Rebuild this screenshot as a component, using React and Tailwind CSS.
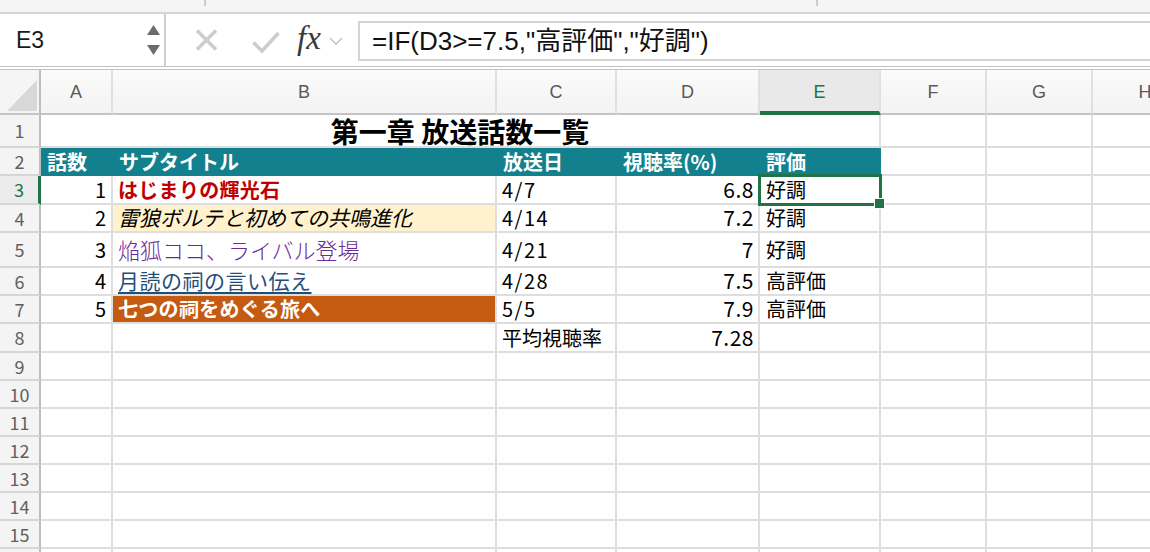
import React from "react";

const JP = "font-['Noto_Sans_CJK_JP',sans-serif]";
const SANS = "font-['Liberation_Sans','Noto_Sans_CJK_JP',sans-serif]";

const base =
  "shrink-0 h-full border-r-2 border-b-2 border-[#dedede] flex items-center whitespace-nowrap";

function Cell({ w, className = "", children }) {
  return <div className={`${w} ${base} ${className}`}>{children}</div>;
}

function RowHead({ n, sel }) {
  return (
    <div
      className={
        sel
          ? "shrink-0 w-[41px] h-full bg-[#ececec] border-r-[3px] border-r-[#217346] border-b-2 border-b-[#d6d6d6] flex items-center justify-center text-[18px] text-[#217346] font-['Noto_Sans_CJK_JP',sans-serif]"
          : "shrink-0 w-[41px] h-full bg-[#f4f4f4] border-r-2 border-r-[#bdbdbd] border-b-2 border-b-[#d6d6d6] flex items-center justify-center text-[18px] text-[#606060] font-['Noto_Sans_CJK_JP',sans-serif]"
      }
    >
      {n}
    </div>
  );
}

function Tail() {
  return (
    <>
      <Cell w="w-[106px]" />
      <Cell w="w-[106px]" />
      <Cell w="w-[106px]" />
    </>
  );
}

function EmptyRow({ n }) {
  return (
    <div className="flex h-[28px]">
      <RowHead n={n} />
      <Cell w="w-[72px]" />
      <Cell w="w-[384px]" />
      <Cell w="w-[120px]" />
      <Cell w="w-[143px]" />
      <Cell w="w-[121px]" />
      <Tail />
    </div>
  );
}

function DataRow({ n, h, sel, num, title, titleCell = "", date, rate, grade }) {
  return (
    <div className={`flex ${h}`}>
      <RowHead n={n} sel={sel} />
      <Cell w="w-[72px]" className="justify-end pr-[5px] text-[20px] text-black font-['Noto_Sans_CJK_JP',sans-serif]">
        {num}
      </Cell>
      <Cell w="w-[384px]" className={`pl-[5px] ${titleCell}`}>
        {title}
      </Cell>
      <Cell w="w-[120px]" className="pl-[5px] text-[20px] tracking-[1.5px] text-black font-['Noto_Sans_CJK_JP',sans-serif]">
        {date}
      </Cell>
      <Cell w="w-[143px]" className="justify-end pr-[4px] text-[21px] tracking-[0.5px] text-black font-['Noto_Sans_CJK_JP',sans-serif]">
        {rate}
      </Cell>
      <Cell w="w-[121px]" className="relative pl-[6px] text-[20px] text-black font-['Noto_Sans_CJK_JP',sans-serif]">
        {grade}
        {sel && (
          <>
            <div className="absolute z-10 -left-[2px] -top-[2px] -right-[3px] -bottom-[3px] border-[3px] border-[#217346]" />
            <div className="absolute z-20 -right-[6px] -bottom-[6px] w-[11px] h-[11px] bg-[#217346] border border-white" />
          </>
        )}
      </Cell>
      <Tail />
    </div>
  );
}

export default function App() {
  return (
    <div className="w-[1150px] h-[552px] overflow-hidden bg-white relative">
      {/* top ribbon strip */}
      <div className="h-[14px] bg-[#f5f5f5] border-b-2 border-[#d4d4d4] flex">
        <div className="w-[206px] h-[6px] border-r-2 border-[#cccccc]" />
        <div className="w-[612px] h-[6px] border-r-2 border-[#cccccc]" />
      </div>

      {/* formula bar */}
      <div className="h-[52px] flex bg-white">
        <div className="w-[166px] h-full border-r-2 border-[#cfcfcf] flex items-center">
          <span className={`pl-[16px] text-[23px] text-[#1a1a1a] ${SANS}`}>E3</span>
          <div className="ml-auto mr-[4px] flex flex-col gap-[10px] items-center">
            <svg width="13" height="10" viewBox="0 0 13 10">
              <path d="M6.5 0 L13 10 L0 10 Z" fill="#6b6b6b" />
            </svg>
            <svg width="13" height="10" viewBox="0 0 13 10">
              <path d="M0 0 L13 0 L6.5 10 Z" fill="#6b6b6b" />
            </svg>
          </div>
        </div>
        <div className="w-[192px] h-full flex items-center">
          <svg className="ml-[29px]" width="23" height="22" viewBox="0 0 23 22">
            <path d="M2 1.5 L21 20.5 M21 1.5 L2 20.5" stroke="#cdcdcd" strokeWidth="3.6" strokeLinecap="butt" />
          </svg>
          <svg className="ml-[34px] mt-[3px]" width="28" height="22" viewBox="0 0 28 22">
            <path d="M1.5 11.5 L10 20 L26.5 2" stroke="#cdcdcd" strokeWidth="3.6" fill="none" />
          </svg>
          <span className="ml-[17px] -mt-[4px] text-[33px] leading-none italic text-[#3a3a3a] font-['Liberation_Serif',serif]">
            fx
          </span>
          <svg className="ml-[8px] mt-[2px]" width="14" height="8" viewBox="0 0 14 8">
            <path d="M1 1 L7 7 L13 1" stroke="#c4c4c4" strokeWidth="1.6" fill="none" />
          </svg>
        </div>
        <div className="flex-1 mt-[7px] h-[40px] border-l-2 border-t-2 border-b-2 border-[#d4d4d4] flex items-center">
          <span className={`pl-[12px] text-[26px] leading-none text-[#111] ${SANS}`}>
            =IF(D3&gt;=7.5,"高評価","好調")
          </span>
        </div>
      </div>

      {/* double separator */}
      <div className="h-[4px] border-t-[1.5px] border-b-[1.5px] border-[#c2c2c2] bg-white" />

      {/* column headers */}
      <div className={`flex h-[45px] ${SANS} text-[18px] text-[#5a5a5a]`}>
        <div className="shrink-0 w-[41px] h-full bg-[#f5f5f5] border-r-2 border-r-[#bdbdbd] border-b-2 border-b-[#c4c4c4] relative">
          <svg className="absolute left-[7px] top-[10px]" width="30" height="31" viewBox="0 0 30 31">
            <path d="M30 0 L30 31 L0 31 Z" fill="#d8d8d8" />
          </svg>
        </div>
        {[
          ["A", "w-[72px]"],
          ["B", "w-[384px]"],
          ["C", "w-[120px]"],
          ["D", "w-[143px]"],
        ].map(([l, w]) => (
          <div
            key={l}
            className={`${w} shrink-0 h-full bg-gradient-to-b from-[#fbfbfb] to-[#f3f3f3] border-r-2 border-r-[#e0e0e0] border-b-2 border-b-[#c4c4c4] flex items-center justify-center pt-[2px]`}
          >
            {l}
          </div>
        ))}
        <div className="w-[121px] shrink-0 h-full bg-[#e9e9e9] border-r-2 border-r-[#e0e0e0] border-b-[4px] border-b-[#217346] flex items-center justify-center pt-[4px] text-[#217346]">
          E
        </div>
        {[
          ["F", "w-[106px]"],
          ["G", "w-[106px]"],
          ["H", "w-[106px]"],
        ].map(([l, w]) => (
          <div
            key={l}
            className={`${w} shrink-0 h-full bg-gradient-to-b from-[#fbfbfb] to-[#f3f3f3] border-r-2 border-r-[#e0e0e0] border-b-2 border-b-[#c4c4c4] flex items-center justify-center pt-[2px]`}
          >
            {l}
          </div>
        ))}
      </div>

      {/* row 1: title */}
      <div className="flex h-[33px]">
        <RowHead n={1} />
        <Cell w="w-[840px]" className={`justify-center pt-[1px] text-[28px] leading-none font-bold text-black ${JP}`}>
          第一章 放送話数一覧
        </Cell>
        <Tail />
      </div>

      {/* row 2: header */}
      <div className="flex h-[28px]">
        <RowHead n={2} />
        <div className={`shrink-0 w-[840px] h-full bg-[#12808d] flex items-center text-white font-bold text-[20px] leading-none ${JP}`}>
          <span className="w-[72px] pl-[6px]">話数</span>
          <span className="w-[384px] pl-[6px]">サブタイトル</span>
          <span className="w-[120px] pl-[6px]">放送日</span>
          <span className="w-[143px] pl-[6px]">視聴率(%)</span>
          <span className="w-[121px] pl-[6px]">評価</span>
        </div>
        <Tail />
      </div>

      <DataRow
        n={3}
        h="h-[29px]"
        sel
        num="1"
        title={<span className={`text-[20px] font-bold tracking-[0.3px] text-[#c00000] ${JP}`}>はじまりの輝光石</span>}
        date="4/7"
        rate="6.8"
        grade="好調"
      />
      <DataRow
        n={4}
        h="h-[28px]"
        num="2"
        titleCell="bg-[#fff2cc]"
        title={<span className={`text-[21px] italic text-black ${JP}`}>雷狼ボルテと初めての共鳴進化</span>}
        date="4/14"
        rate="7.2"
        grade="好調"
      />
      <DataRow
        n={5}
        h="h-[35px]"
        num="3"
        title={<span className={`text-[22px] font-light text-[#6a2a9c] ${JP}`}>焔狐ココ、ライバル登場</span>}
        date="4/21"
        rate="7"
        grade="好調"
      />
      <DataRow
        n={6}
        h="h-[28px]"
        num="4"
        title={
          <span className={`text-[21px] tracking-[0.5px] text-[#1f4e79] underline underline-offset-[3px] decoration-[1.5px] ${JP}`}>
            月読の祠の言い伝え
          </span>
        }
        date="4/28"
        rate="7.5"
        grade="高評価"
      />
      <DataRow
        n={7}
        h="h-[28px]"
        num="5"
        titleCell="bg-[#c55a11] border-[#c55a11]"
        title={<span className={`text-[20px] font-bold tracking-[0.3px] text-white ${JP}`}>七つの祠をめぐる旅へ</span>}
        date="5/5"
        rate="7.9"
        grade="高評価"
      />
      <div className="flex h-[29px]">
        <RowHead n={8} />
        <Cell w="w-[72px]" />
        <Cell w="w-[384px]" />
        <Cell w="w-[120px]" className={`pl-[5px] text-[20px] text-black ${JP}`}>
          平均視聴率
        </Cell>
        <Cell w="w-[143px]" className={`justify-end pr-[4px] text-[21px] tracking-[0.5px] text-black ${JP}`}>
          7.28
        </Cell>
        <Cell w="w-[121px]" />
        <Tail />
      </div>
      {[9, 10, 11, 12, 13, 14, 15].map((n) => (
        <EmptyRow key={n} n={n} />
      ))}
      <EmptyRow n="" />
    </div>
  );
}
